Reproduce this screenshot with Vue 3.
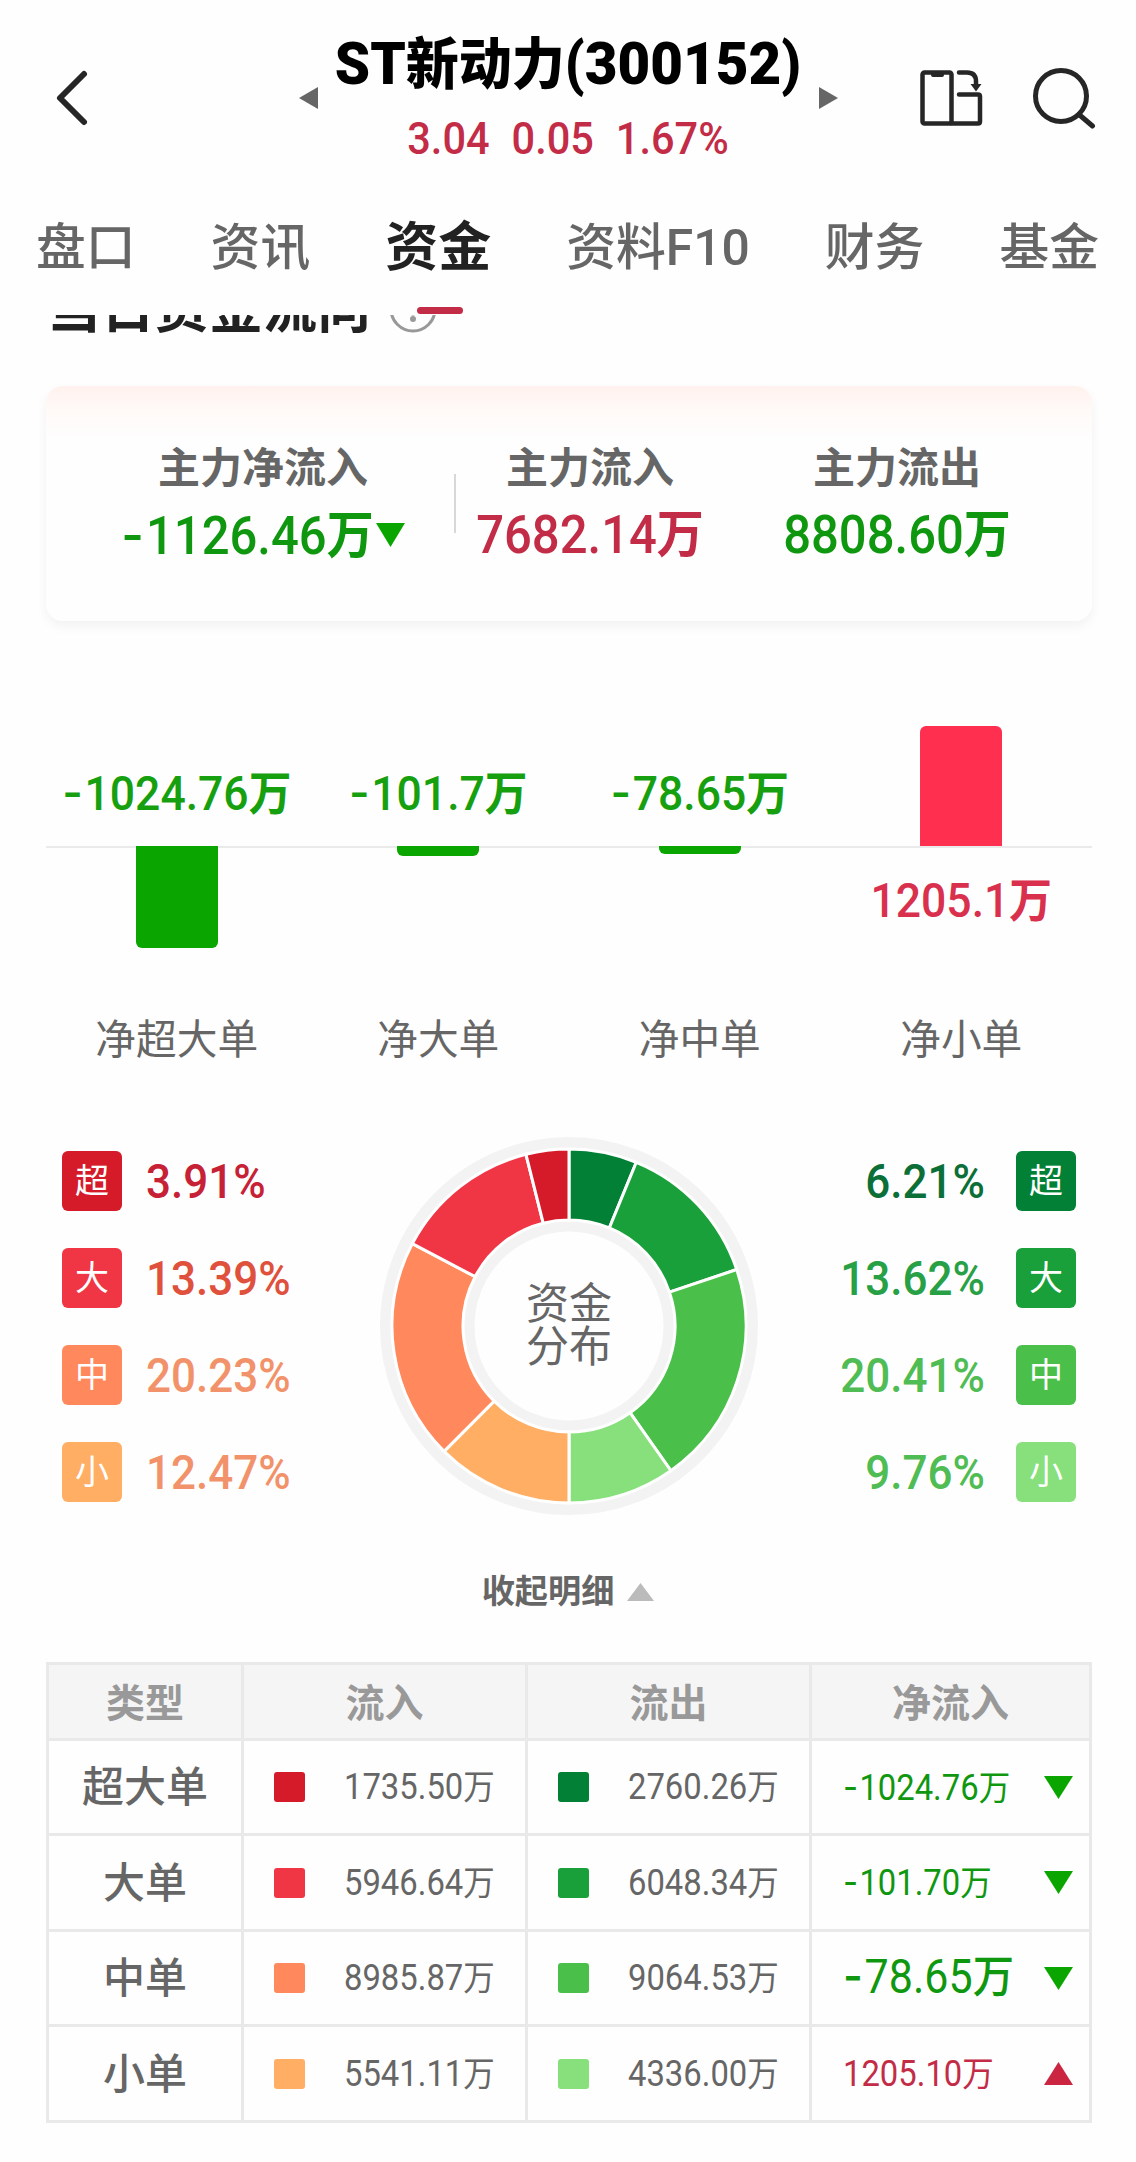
<script setup>
import { h } from 'vue';

const tabs = ['盘口', '资讯', '资金', '资料F10', '财务', '基金'];
const activeTab = '资金';

const summary = [
  { label: '主力净流入', value: '-1126.46', tone: 'green', arrow: true },
  { label: '主力流入', value: '7682.14', tone: 'red' },
  { label: '主力流出', value: '8808.60', tone: 'green' },
];

const bars = [
  { label: '净超大单', value: '-1024.76', height: 102 },
  { label: '净大单', value: '-101.7', height: 10 },
  { label: '净中单', value: '-78.65', height: 8 },
  { label: '净小单', value: '1205.1', height: 120 },
];

const inflow = [
  { name: '超', pct: 3.91, color: '#d51a29', text: '#c62134' },
  { name: '大', pct: 13.39, color: '#f03545', text: '#df513c' },
  { name: '中', pct: 20.23, color: '#ff895c', text: '#f2926a' },
  { name: '小', pct: 12.47, color: '#ffae63', text: '#f2926a' },
];
const outflow = [
  { name: '超', pct: 6.21, color: '#028036', text: '#0b6f37' },
  { name: '大', pct: 13.62, color: '#19a03a', text: '#27a046' },
  { name: '中', pct: 20.41, color: '#4ac04a', text: '#4fbc54' },
  { name: '小', pct: 9.76, color: '#87e07b', text: '#4fbc54' },
];

const rows = [
  { type: '超大单', inn: '1735.50', out: '2760.26', net: '-1024.76' },
  { type: '大单', inn: '5946.64', out: '6048.34', net: '-101.70' },
  { type: '中单', inn: '8985.87', out: '9064.53', net: '-78.65', big: true },
  { type: '小单', inn: '5541.11', out: '4336.00', net: '1205.10' },
];

function isNegative(value) {
  return value[0] === '-';
}

// sign + digits + 万, each part has its own font
function Amount(props) {
  const negative = isNegative(props.value);
  return h('span', { class: 'amount' }, [
    negative ? h('span', { class: 'sign' }, '-') : null,
    negative ? props.value.slice(1) : props.value,
    h('span', { class: 'unit' }, '万'),
  ]);
}
Amount.props = ['value'];

function point(radius, angle) {
  return `${(radius * Math.sin(angle)).toFixed(2)} ${(-radius * Math.cos(angle)).toFixed(2)}`;
}

function getSlices() {
  // clockwise from the top: outflow first, inflow back up the left side
  const items = [...outflow, ...inflow.slice().reverse()];
  const total = items.reduce((sum, item) => sum + item.pct, 0);
  let angle = 0;
  return items.map((item) => {
    const start = angle;
    angle += (item.pct / total) * Math.PI * 2;
    return {
      color: item.color,
      d: `M${point(177, start)}A177 177 0 0 1 ${point(177, angle)}L${point(106, angle)}A106 106 0 0 0 ${point(106, start)}Z`,
    };
  });
}
const slices = getSlices();
</script>
<template>
  <div class="page">
    <header class="header">
      <svg class="back" width="40" height="64" viewBox="0 0 40 64">
        <path d="M31 8L7 32L31 56" />
      </svg>
      <div class="stock">
        <svg class="switch" width="19" height="22" viewBox="0 0 19 22"><path d="M19 0V22L0 11Z" /></svg>
        <div class="stock-info">
          <h1>ST<span>新动力</span>(300152)</h1>
          <div class="quote"><span>3.04</span><span>0.05</span><span>1.67%</span></div>
        </div>
        <svg class="switch" width="19" height="22" viewBox="0 0 19 22"><path d="M0 0V22L19 11Z" /></svg>
      </div>
      <div class="tools">
        <svg width="64" height="60" viewBox="0 0 64 60">
          <rect x="2.5" y="4.5" width="29" height="51" rx="2" />
          <path d="M31.500 55.500H58Q60 55.500 60 53.500V28.500Q60 26.500 58 26.500H39" />
          <path d="M39 4.500H47Q56 4.500 56 13.500V16" />
          <path class="solid" d="M11 4H24V7Q24 9 22 9H13Q11 9 11 7Z" />
          <path class="solid" d="M50.500 16H61.500L56 23.500Z" />
        </svg>
        <svg width="66" height="64" viewBox="0 0 66 64">
          <circle cx="29" cy="31" r="25.500" />
          <path d="M47 49.500L60.500 61" />
        </svg>
      </div>
    </header>

    <nav class="tabs">
      <div v-for="tab in tabs" :key="tab" class="tab" :class="{ active: tab === activeTab }">{{ tab }}</div>
    </nav>

    <div class="section-title">
      <h2>当日资金流向</h2>
      <svg width="50" height="50" viewBox="0 0 50 50">
        <circle cx="25" cy="25" r="22" />
        <path d="M25 12V31.500" />
        <circle class="dot" cx="25" cy="35" r="3" />
      </svg>
    </div>

    <section class="card">
      <div v-for="item in summary" :key="item.label" class="summary">
        <div class="summary-label">{{ item.label }}</div>
        <div class="summary-value" :class="item.tone">
          <Amount :value="item.value" />
          <svg v-if="item.arrow" width="29" height="24" viewBox="0 0 29 24"><path d="M0 0H29L14.500 24Z" /></svg>
        </div>
      </div>
    </section>

    <section class="bars">
      <div v-for="bar in bars" :key="bar.label" class="bar-col" :class="isNegative(bar.value) ? 'down' : 'up'">
        <div class="half top">
          <Amount v-if="isNegative(bar.value)" :value="bar.value" />
          <div v-else class="bar" :style="{ height: bar.height + 'px' }"></div>
        </div>
        <div class="half">
          <div v-if="isNegative(bar.value)" class="bar" :style="{ height: bar.height + 'px' }"></div>
          <Amount v-else :value="bar.value" />
        </div>
        <div class="bar-label">{{ bar.label }}</div>
      </div>
    </section>

    <section class="share">
      <div class="legend">
        <div v-for="item in inflow" :key="item.name" class="legend-row">
          <span class="badge" :style="{ background: item.color }">{{ item.name }}</span>
          <span class="pct" :style="{ color: item.text }">{{ item.pct }}%</span>
        </div>
      </div>
      <div class="donut">
        <svg width="378" height="378" viewBox="-189 -189 378 378">
          <circle class="ring" r="183.500" />
          <circle class="ring" r="100" />
          <path v-for="(slice, i) in slices" :key="i" :d="slice.d" :fill="slice.color" />
        </svg>
        <div class="donut-text">资金<br>分布</div>
      </div>
      <div class="legend right">
        <div v-for="item in outflow" :key="item.name" class="legend-row">
          <span class="pct" :style="{ color: item.text }">{{ item.pct }}%</span>
          <span class="badge" :style="{ background: item.color }">{{ item.name }}</span>
        </div>
      </div>
    </section>

    <div class="toggle">
      <span>收起明细</span>
      <svg width="27" height="18" viewBox="0 0 27 18"><path d="M0 18H27L13.500 0Z" /></svg>
    </div>

    <section class="table">
      <div class="th">类型</div>
      <div class="th">流入</div>
      <div class="th">流出</div>
      <div class="th">净流入</div>
      <template v-for="(row, i) in rows" :key="row.type">
        <div class="td type">{{ row.type }}</div>
        <div class="td flow">
          <span class="swatch" :style="{ background: inflow[i].color }"></span>
          <Amount :value="row.inn" />
        </div>
        <div class="td flow">
          <span class="swatch" :style="{ background: outflow[i].color }"></span>
          <Amount :value="row.out" />
        </div>
        <div class="td net" :class="[isNegative(row.net) ? 'green' : 'red', { big: row.big }]">
          <Amount :value="row.net" />
          <svg width="29" height="23" viewBox="0 0 29 23">
            <path :d="isNegative(row.net) ? 'M0 0H29L14.500 23Z' : 'M0 23H29L14.500 0Z'" />
          </svg>
        </div>
      </template>
    </section>
  </div>
</template>
<style>
  body {
    margin: 0;
    background: #fefefe;
  }
</style>
<style scoped>
  .page {
    box-sizing: border-box;
    width: 1136px;
    height: 2162px;
    overflow: hidden;
    background: #fefefe;
    color: #666;
    font-family: Roboto, "Noto Sans CJK SC", sans-serif;
  }
  svg {
    display: block;
    flex: none;
  }
  h1, h2 {
    margin: 0;
  }

  .header {
    display: flex;
    align-items: flex-start;
    justify-content: space-between;
    height: 176px;
    padding: 0 38px 0 53px;
  }
  .back {
    margin-top: 66px;
    fill: none;
    stroke: #262626;
    stroke-width: 6;
    stroke-linecap: round;
    stroke-linejoin: round;
  }
  .stock {
    display: flex;
    align-items: flex-start;
    justify-content: space-between;
    width: 539px;
    margin-left: 123px;
  }
  .switch {
    margin-top: 87px;
    fill: #666;
  }
  .stock-info {
    display: flex;
    flex-direction: column;
    align-items: center;
    padding-top: 34px;
  }
  h1 {
    color: #000;
    font-size: 56.500px;
    font-weight: 900;
    line-height: 60px;
    white-space: nowrap;
    transform: scaleY(1.04);
  }
  h1 span {
    font-size: 53px;
  }
  .quote {
    display: flex;
    gap: 22px;
    margin-top: 19px;
    color: #c32c47;
    font-size: 41.500px;
    font-weight: 500;
    line-height: 50px;
    transform: scaleY(1.06);
  }
  .tools {
    display: flex;
    gap: 48px;
    margin-top: 65px;
    fill: none;
    stroke: #262626;
    stroke-width: 5;
    stroke-linecap: round;
    stroke-linejoin: round;
  }
  .tools svg:first-child {
    margin-top: 3px;
    stroke-width: 4.500;
  }
  .tools .solid {
    fill: #262626;
    stroke: none;
  }

  .tabs {
    display: flex;
    gap: 75px;
    height: 139px;
    padding-left: 36px;
    font-size: 49.800px;
    font-weight: 500;
    line-height: 144px;
    white-space: nowrap;
  }
  .tab {
    position: relative;
  }
  .tab.active {
    color: #222;
    font-size: 53px;
    font-weight: 700;
  }
  .tab.active::after {
    content: "";
    position: absolute;
    left: 32px;
    top: 131px;
    z-index: 1;
    width: 46px;
    height: 7px;
    border-radius: 4px;
    background: #c32c47;
  }

  .section-title {
    display: flex;
    align-items: flex-end;
    gap: 17px;
    height: 19px;
    padding: 0 0 1px 47px;
    overflow: hidden;
  }
  .section-title h2 {
    color: #222;
    font-size: 54px;
    font-weight: 700;
    line-height: 48px;
  }
  .section-title svg {
    fill: none;
    stroke: #999;
    stroke-width: 3;
  }
  .section-title .dot {
    fill: #999;
    stroke: none;
  }

  .card {
    display: grid;
    grid-template-columns: 386px 268px 346px;
    box-sizing: border-box;
    width: 1046px;
    height: 235px;
    margin: 51px 0 0 46px;
    padding: 52px 22px 0 24px;
    border-radius: 17px;
    background: linear-gradient(#fff2ee, #fffaf8 26px, #fefefe 54px);
    box-shadow: 0 5px 12px rgba(0, 0, 0, 0.05);
  }
  .summary {
    display: flex;
    flex-direction: column;
    align-items: center;
  }
  .summary:first-child {
    height: 95px;
    background: linear-gradient(#d8d8d8, #d8d8d8) right bottom / 2px 59px no-repeat;
  }
  .summary-label {
    padding-top: 3px;
    font-size: 42px;
    font-weight: 600;
    line-height: 56px;
  }
  .summary-value {
    display: flex;
    align-items: center;
    gap: 2px;
    margin-top: 9px;
    font-size: 49px;
    font-weight: 500;
    line-height: 57px;
  }
  .summary-value svg {
    fill: #0ba500;
  }
  .green {
    color: #109710;
  }
  .red {
    color: #c32c47;
  }

  /* digits are taller than Roboto draws them */
  .amount {
    display: block;
    white-space: nowrap;
    transform: scaleY(1.1);
  }
  .amount :deep(.sign) {
    margin-right: 0.04em;
    font-family: Inter, sans-serif;
  }
  .amount :deep(.unit) {
    font-size: 0.96em;
    line-height: 1;
  }
  .summary-value :deep(.unit),
  .bar-col :deep(.unit) {
    font-weight: 700;
  }

  .bars {
    display: grid;
    grid-template-columns: repeat(4, 1fr);
    width: 1046px;
    margin: 105px 0 0 46px;
  }
  .bar-col {
    display: flex;
    flex-direction: column;
    align-items: center;
    font-size: 44.500px;
    font-weight: 500;
    line-height: 52px;
  }
  .half {
    display: flex;
    flex-direction: column;
    align-items: center;
    box-sizing: border-box;
    width: 100%;
    height: 121px;
    background: linear-gradient(#eaeaea, #eaeaea) left top / 100% 2px no-repeat;
  }
  .half.top {
    justify-content: flex-end;
    height: 120px;
    background: none;
  }
  .down {
    color: #16a00f;
  }
  .down .top .amount {
    margin-bottom: 27px;
  }
  .up {
    color: #d9304d;
  }
  .up .amount {
    margin-top: 28px;
  }
  .bar {
    width: 82px;
  }
  .down .bar {
    border-radius: 0 0 6px 6px;
    background: #0ba500;
  }
  .up .bar {
    border-radius: 6px 6px 0 0;
    background: #ff2f50;
  }
  .bar-label {
    margin-top: 45px;
    color: #666;
    font-size: 40.700px;
    font-weight: 400;
    line-height: 56px;
  }

  .share {
    display: flex;
    justify-content: space-between;
    margin-top: 69px;
    padding: 0 60px 0 62px;
  }
  .legend {
    display: flex;
    flex-direction: column;
    gap: 37.500px;
    width: 250px;
    padding-top: 14px;
  }
  .legend-row {
    display: flex;
    align-items: center;
    gap: 24px;
  }
  .legend.right .legend-row {
    justify-content: flex-end;
    gap: 31px;
  }
  .badge {
    width: 60px;
    height: 59.500px;
    border-radius: 6px;
    color: #fff;
    font-size: 34px;
    line-height: 60px;
    text-align: center;
  }
  .pct {
    font-size: 44px;
    font-weight: 500;
    line-height: 56px;
    transform: scaleY(1.11);
  }
  .donut {
    display: grid;
    place-items: center;
    width: 378px;
    height: 378px;
  }
  .donut > * {
    grid-area: 1 / 1;
  }
  .donut path {
    stroke: #fff;
    stroke-width: 3;
  }
  .donut .ring {
    fill: none;
    stroke: #f3f3f3;
    stroke-width: 11;
  }
  .donut-text {
    font-size: 43px;
    line-height: 43.500px;
  }

  .toggle {
    display: flex;
    align-items: center;
    justify-content: center;
    gap: 13px;
    height: 48px;
    margin-top: 50px;
    font-size: 33.200px;
    font-weight: 700;
    line-height: 48px;
  }
  .toggle span {
    padding-top: 5px;
  }
  .toggle svg {
    margin-top: 5px;
    fill: #bbb;
  }

  .table {
    display: grid;
    grid-template-columns: 192px 281px 281px 277px;
    grid-template-rows: 73px 92px 93px 92px 93px;
    gap: 3px;
    box-sizing: border-box;
    width: 1046px;
    margin: 49px 0 0 46px;
    border: 3px solid #e9e9e9;
    background: #e9e9e9;
  }
  .th {
    display: flex;
    align-items: center;
    justify-content: center;
    padding-top: 5px;
    background: #f5f5f5;
    color: #999;
    font-size: 39px;
    font-weight: 700;
    line-height: 50px;
  }
  .td {
    display: flex;
    align-items: center;
    background: #fefefe;
    font-size: 32.800px;
    line-height: 40px;
  }
  .type {
    justify-content: center;
    padding-top: 2px;
    font-size: 42px;
    font-weight: 500;
  }
  .flow {
    gap: 39px;
    padding-left: 30px;
  }
  .swatch {
    width: 31px;
    height: 30px;
    border-radius: 3px;
  }
  .net {
    justify-content: space-between;
    padding: 0 16px 0 31px;
  }
  .net.big {
    font-size: 43px;
    font-weight: 450;
  }
  .net.green svg {
    fill: #0ba500;
  }
  .net.red svg {
    fill: #cb2641;
  }
</style>
